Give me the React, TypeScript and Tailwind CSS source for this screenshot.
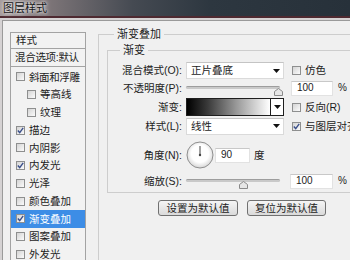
import type { ReactNode } from "react";

const layerItems: { label: string; on?: boolean; indent?: boolean; active?: boolean }[] = [
  { label: "斜面和浮雕" },
  { label: "等高线", indent: true },
  { label: "纹理", indent: true },
  { label: "描边", on: true },
  { label: "内阴影" },
  { label: "内发光", on: true },
  { label: "光泽" },
  { label: "颜色叠加" },
  { label: "渐变叠加", on: true, active: true },
  { label: "图案叠加" },
  { label: "外发光" },
];

function CheckBox({ on }: { on?: boolean }) {
  return (
    <span className="w-[9px] h-[9px] shrink-0 border border-[#8e8f8f] bg-gradient-to-br from-[#d4d4d4] to-[#fbfbfb] flex items-center justify-center">
      {on && (
        <svg width="7" height="7" viewBox="0 0 7 7">
          <path d="M0.8 3.6 L2.7 5.6 L6.2 0.9" fill="none" stroke="#3a4f8a" strokeWidth="1.4" />
        </svg>
      )}
    </span>
  );
}

function Arrow() {
  return (
    <svg width="7" height="4" viewBox="0 0 7 4" className="shrink-0">
      <polygon points="0,0 7,0 3.5,4" fill="#111" />
    </svg>
  );
}

function Select({ value }: { value: string }) {
  return (
    <div className="w-[98px] h-[17px] shrink-0 bg-white border border-[#dadada] border-t-[#c4c4c4] flex items-center pl-[4px] pr-[3px]">
      <span className="flex-1">{value}</span>
      <Arrow />
    </div>
  );
}

function NumberBox({ value, w }: { value: string; w: string }) {
  return (
    <div className={`${w} h-[15px] bg-white border border-[#e2e2e2] border-t-[#c8c8c8] flex items-center pl-[5px] text-[10px]`}>
      {value}
    </div>
  );
}

function Slider({ pos }: { pos: number }) {
  return (
    <div className="relative w-[94px] h-[16px] shrink-0">
      <div className="absolute left-0 right-0 top-[6px] h-[3px] rounded-full bg-[#c9c9c9] border-t border-[#9d9d9d]" />
      <svg
        width="9"
        height="8"
        viewBox="0 0 9 8"
        className="absolute top-[8px]"
        style={{ left: `${pos}px` }}
      >
        <path d="M0.5 7.5 L0.5 3.5 L4.5 0.5 L8.5 3.5 L8.5 7.5 Z" fill="#e6e6e6" stroke="#8a8a8a" />
      </svg>
    </div>
  );
}

function Row({ label, children, h, mt }: { label: string; children: ReactNode; h: string; mt: string }) {
  return (
    <div className={`flex items-center ${h} ${mt}`}>
      <span className="w-[75px] shrink-0 text-right pr-[1px] mr-[3px] whitespace-nowrap">{label}</span>
      {children}
    </div>
  );
}

export default function App() {
  return (
    <div className="w-[350px] h-[260px] overflow-hidden bg-[#d5d2d3] font-['Liberation_Sans','Noto_Sans_CJK_SC',sans-serif] text-[10.5px] leading-none text-[#1c1c1c]">
      <div className="h-[18px] border-b-2 border-[#4e2a31] bg-[linear-gradient(90deg,#a59c9d_0%,#7d7578_14%,#454a52_38%,#2d3740_60%,#27313a_100%)] flex items-center pl-[3px]">
        <span className="text-[11px] text-[#161616] [text-shadow:0_0_3px_#fff,0_0_5px_#eee]">图层样式</span>
      </div>

      <div className="ml-[2px] mt-[2px] h-[240px] border-l border-t border-[#9a9a9a] bg-[#f0f0f0] flex items-start">
        {/* left list */}
        <div className="ml-[7px] mt-[11px] w-[76px] h-[240px] shrink-0 border border-[#a3a3a3] bg-[#f2f2f2] text-[10.5px]">
          <div className="h-[16px] border-b border-[#a3a3a3] flex items-center pl-[5px]">样式</div>
          <div className="h-[18px] border-b border-[#a3a3a3] flex items-center pl-[4px] whitespace-nowrap tracking-[-0.3px]">
            混合选项:默认
          </div>
          <div className="pt-[1px]">
            {layerItems.map((it) => (
              <div
                key={it.label}
                className={`h-[17.75px] flex items-center gap-[4px] whitespace-nowrap ${it.indent ? "pl-[16px]" : "pl-[5px]"} ${
                  it.active ? "bg-[#3d8de6] text-white" : ""
                }`}
              >
                <CheckBox on={it.on} />
                <span className={it.label.length > 4 ? "tracking-[-0.4px]" : ""}>{it.label}</span>
              </div>
            ))}
          </div>
        </div>

        {/* right panel */}
        <fieldset className="ml-[12px] mt-[6px] w-[280px] h-[260px] shrink-0 border border-[#cdcdcd] pl-[8px]">
          <legend className="ml-[7px] px-[3px] leading-[14px] text-[11px]">渐变叠加</legend>

          <fieldset className="mt-[2px] w-[260px] border border-[#cdcdcd] pt-[5px] pb-[3px]">
            <legend className="ml-[12px] px-[3px] leading-[14px] text-[11px]">渐变</legend>

            <Row label="混合模式(O):" h="h-[17px]" mt="mt-0">
              <Select value="正片叠底" />
              <span className="ml-[8px]">
                <CheckBox />
              </span>
              <span className="ml-[4px]">仿色</span>
            </Row>

            <Row label="不透明度(P):" h="h-[16px]" mt="mt-[1px]">
              <Slider pos={88} />
              <span className="ml-[11px]">
                <NumberBox value="100" w="w-[42px]" />
              </span>
              <span className="ml-[5px] text-[10px]">%</span>
            </Row>

            <Row label="渐变:" h="h-[18px]" mt="mt-[2px]">
              <div className="w-[98px] h-[18px] shrink-0 border border-[#1e1e1e] bg-white flex">
                <div className="flex-1 bg-[linear-gradient(90deg,#000_0%,#3a3a3a_25%,#9a9a9a_60%,#fff_100%)]" />
                <div className="w-[13px] border-l border-[#1e1e1e] flex items-center justify-center">
                  <Arrow />
                </div>
              </div>
              <span className="ml-[8px]">
                <CheckBox />
              </span>
              <span className="ml-[4px] whitespace-nowrap">反向(R)</span>
            </Row>

            <Row label="样式(L):" h="h-[16px]" mt="mt-[2px]">
              <Select value="线性" />
              <span className="ml-[8px]">
                <CheckBox on />
              </span>
              <span className="ml-[4px] whitespace-nowrap">与图层对齐</span>
            </Row>

            <Row label="角度(N):" h="h-[28px]" mt="mt-[7px]">
              <svg width="28" height="28" viewBox="0 0 28 28" className="shrink-0">
                <defs>
                  <radialGradient id="dial" cx="50%" cy="45%" r="55%">
                    <stop offset="60%" stopColor="#ffffff" />
                    <stop offset="100%" stopColor="#d6d6d6" />
                  </radialGradient>
                </defs>
                <circle cx="14" cy="14" r="13" fill="url(#dial)" stroke="#8f8f8f" />
                <line x1="14" y1="14" x2="14" y2="5" stroke="#444" strokeWidth="1" />
                <circle cx="14" cy="14" r="1.2" fill="#444" />
              </svg>
              <span className="ml-[1px]">
                <NumberBox value="90" w="w-[35px]" />
              </span>
              <span className="ml-[4px]">度</span>
            </Row>

            <Row label="缩放(S):" h="h-[16px]" mt="mt-[4px]">
              <Slider pos={53} />
              <span className="ml-[10px]">
                <NumberBox value="100" w="w-[43px]" />
              </span>
              <span className="ml-[5px] text-[10px]">%</span>
            </Row>
          </fieldset>

          <div className="mt-[7px] ml-[51px] flex gap-[9px]">
            <button className="w-[80px] h-[16px] shrink-0 rounded-[3px] border border-[#707070] bg-gradient-to-b from-[#f5f5f5] to-[#dadada] text-[10.5px] leading-none">
              设置为默认值
            </button>
            <button className="w-[79px] h-[16px] shrink-0 rounded-[3px] border border-[#707070] bg-gradient-to-b from-[#f5f5f5] to-[#dadada] text-[10.5px] leading-none">
              复位为默认值
            </button>
          </div>
        </fieldset>
      </div>
    </div>
  );
}
